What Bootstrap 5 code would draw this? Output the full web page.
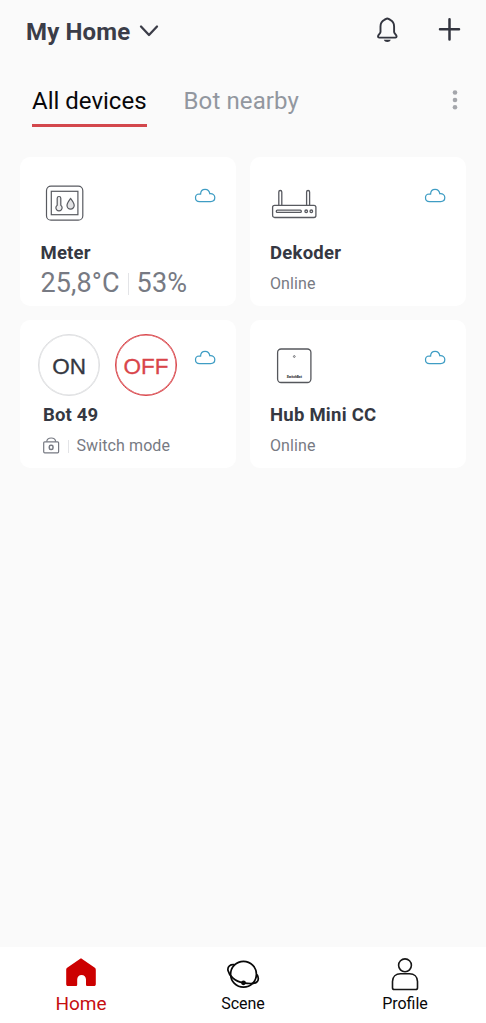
<!DOCTYPE html>
<html lang="en">
<head>
<meta charset="utf-8">
<meta name="viewport" content="width=device-width, initial-scale=1">
<title>My Home</title>
<link href="https://cdn.jsdelivr.net/npm/bootstrap@5.3.0/dist/css/bootstrap.min.css" rel="stylesheet">
<style>
body{background:#fafafa;font-family:Roboto,"Liberation Sans",sans-serif;color:#353841;height:1023px;overflow:hidden}
svg{display:block;flex:none;overflow:visible}
.top-bar{height:64px;padding:0 25px 0 26px}
.home-name{font-size:24px;line-height:30px;font-weight:700;color:#3b3d48;letter-spacing:.14px}
.tabs{height:63px;padding:18px 27px 0 32px;gap:37px}
.tab-item{font-size:24px;line-height:38px;height:45px;color:#92979f;white-space:nowrap;letter-spacing:.12px}
.tab-item.current{color:#08080a;border-bottom:3px solid #d3474c;letter-spacing:0}
.devices{display:grid;grid-template-columns:216px 216px;column-gap:14px;row-gap:14px;grid-template-rows:149px 148px;padding:30px 20px 0}
.device{background:#fff;border:0;border-radius:10px;padding:0 20px}
.art{height:84px}
.second .art{height:83px}
.device-name{font-size:18.5px;line-height:24px;font-weight:700;color:#353842;white-space:nowrap;letter-spacing:.25px}
.status{height:38px;font-size:16px;line-height:38px;color:#777a83;white-space:nowrap;letter-spacing:.1px}
.reading{font-size:27px;line-height:36px;padding-left:.5px}
.rule{width:1px;background:#e3e4e7}
.round-btn{width:62px;height:62px;margin-top:14px;border:1px solid #dedfe1;box-shadow:inset 0 0 0 .5px #dedfe1;border-radius:50%;padding:3px 0 0;font-family:"Liberation Sans",Arial,sans-serif;font-size:22.5px;line-height:57px;color:#353842;background:#fff;-webkit-text-stroke:.3px currentColor}
.round-btn.off{border-color:#d9454a;box-shadow:inset 0 0 0 .5px #d9454a;color:#d9454a}
.bottom-nav{height:76px;background:#fff}
.nav-cell{width:162px;font-size:16px;line-height:20px;color:#080808}
.nav-cell.current{font-size:19px;color:#c60d10}
.nav-cell svg{height:47px}
</style>
<script src="https://cdn.jsdelivr.net/npm/bootstrap@5.3.0/dist/js/bootstrap.bundle.min.js"></script>
</head>
<body class="d-flex flex-column">
<svg width="0" height="0" class="position-absolute" aria-hidden="true">
<symbol id="cloud" viewBox="0 0 22 15"><path d="M5.500 13.600C3 13.600 1.500 12 1.500 9.800S3 6.100 5.200 6h1.400C6.700 3 8.600 1.300 11.100 1.300s4.300 1.700 4.700 4.400C19 5.400 20.800 7.200 20.800 9.600s-1.700 4-4.100 4z" fill="none" stroke="#3f9dc4" stroke-width="1.250"/></symbol>
</svg>
<header class="top-bar d-flex align-items-center">
<span class="home-name">My Home</span>
<svg width="20" height="14" viewBox="0 0 20 14" style="margin-left:9px;margin-top:-2px" fill="none" stroke="#3b3d48" stroke-width="2.300" stroke-linecap="round" stroke-linejoin="round"><path d="M2 2.500L10 11l8-8.500"/></svg>
<svg class="ms-auto" width="24" height="28" viewBox="0 0 24 28" style="margin-right:39px;margin-top:-4px" fill="none" stroke="#33353f" stroke-width="1.900" stroke-linejoin="round"><path d="M12.300 2.500c-1 0-1.700.8-2.900 1.300C6.800 5 5.500 7.500 5.500 10.500V16c0 1.500-2.500 2.900-2.500 4.500 0 .7.500 1.100 1.200 1.100h16.200c.7 0 1.200-.4 1.200-1.100 0-1.600-2.500-3-2.500-4.500v-5.500c0-3-1.300-5.500-3.900-6.700C14 3.300 13.300 2.500 12.300 2.500z"/><path d="M8.800 23.700h7c-.7 1.500-1.700 2.200-3.500 2.200s-2.800-.7-3.500-2.200z" fill="#33353f" stroke="none"/></svg>
<svg width="23" height="24" viewBox="0 0 23 24" style="margin-top:-6px" stroke="#33353f" stroke-width="2.500" stroke-linecap="round"><path d="M2 12.300h19M11.500 2.200v20.400"/></svg>
</header>
<nav class="tabs d-flex">
<span class="tab-item current">All devices</span>
<span class="tab-item">Bot nearby</span>
<svg class="ms-auto" width="9" height="38" viewBox="0 0 9 38" fill="#a4a6ab"><circle cx="5" cy="10.500" r="2.300"/><circle cx="5" cy="18" r="2.300"/><circle cx="5" cy="25.300" r="2.300"/></svg>
</nav>
<main class="devices">
<section class="card device">
<div class="art d-flex justify-content-between">
<svg width="48" height="83" viewBox="0 0 48 83" fill="none" stroke="#585a60" stroke-width="1.200"><rect x="6.500" y="29.200" width="36.300" height="34" rx="4.500"/><rect x="11.300" y="34.300" width="26.600" height="23.400"/><path d="M17.200 49.200v-6.900a1.800 1.800 0 0 1 3.600 0v6.900a3.100 3.100 0 1 1-3.600 0z" transform="translate(0 -1)" fill="#ededee"/><path d="M30.600 41.500c1.700 2.300 3.600 4.800 3.600 7a3.600 3.600 0 0 1-7.200 0c0-2.200 1.900-4.700 3.600-7z" fill="#e2e2e4"/></svg>
<svg width="22" height="15" style="margin-top:31px"><use href="#cloud"/></svg>
</div>
<div class="device-name" style="padding-left:.5px;letter-spacing:.2px">Meter</div>
<div class="status reading d-flex"><span>25,8°C</span><span class="rule" style="height:22px;margin:8px 8px 0"></span><span>53%</span></div>
</section>
<section class="card device">
<div class="art d-flex justify-content-between">
<svg width="48" height="83" viewBox="0 0 48 83" fill="none" stroke="#585a60" stroke-width="1.300"><rect x="2.600" y="48.300" width="43.300" height="12.200" rx="2"/><path d="M8.800 48V35a1.500 1.500 0 0 1 3 0v13M36.600 48V35a1.500 1.500 0 0 1 3 0v13"/><rect x="6.300" y="53.200" width="25" height="2.200" rx="1"/><circle cx="36.200" cy="54.300" r="1.300"/><circle cx="41.300" cy="54.300" r="1.300"/></svg>
<svg width="22" height="15" style="margin-top:31px"><use href="#cloud"/></svg>
</div>
<div class="device-name">Dekoder</div>
<div class="status">Online</div>
</section>
<section class="card device second">
<div class="art d-flex" style="margin-left:-2px">
<button class="round-btn">ON</button>
<button class="round-btn off" style="margin-left:15px">OFF</button>
<svg class="ms-auto" width="22" height="15" style="margin-top:30px"><use href="#cloud"/></svg>
</div>
<div class="device-name" style="padding-left:3px;letter-spacing:.15px">Bot 49</div>
<div class="status d-flex align-items-center" style="padding-left:3px"><svg width="17" height="17" viewBox="0 0 17 17" style="margin-top:-2px" fill="none" stroke="#777a83" stroke-width="1.200"><rect x=".7" y="4.800" width="14.900" height="11" rx="1"/><path d="M3.700 4.600C4 2.200 5.500 1 8.200 1s4.200 1.200 4.500 3.600"/><rect x="6.300" y="8.200" width="3.700" height="4.300" rx="1.500" stroke-width="1.500"/></svg><span class="rule" style="height:13px;margin:0 8px 0 7.500px"></span><span>Switch mode</span></div>
</section>
<section class="card device second">
<div class="art d-flex justify-content-between">
<svg width="48" height="82" viewBox="0 0 48 82" fill="none" stroke="#55575c" stroke-width="1.300"><rect x="7.600" y="29" width="33.300" height="33.500" rx="3.500"/><circle cx="24.300" cy="36.500" r=".9" stroke-width=".8"/><text x="16.800" y="57.600" font-size="3.300" font-weight="900" textLength="15" lengthAdjust="spacingAndGlyphs" fill="#333" stroke="none">SwitchBot</text></svg>
<svg width="22" height="15" style="margin-top:30px"><use href="#cloud"/></svg>
</div>
<div class="device-name">Hub Mini CC</div>
<div class="status">Online</div>
</section>
</main>
<footer class="bottom-nav d-flex mt-auto">
<div class="nav-cell current d-flex flex-column align-items-center">
<svg width="34" height="47" viewBox="0 0 34 47"><path d="M17 11.300L30.500 20.500c1 .7 1.300 1.400 1.300 2.500v14c0 1.500-.6 2.100-2 2.100h-6.300c-1 0-1.500-.5-1.500-1.500v-5c0-3-1.900-4.700-4.400-4.700s-4.400 1.700-4.400 4.700v5c0 1-.5 1.500-1.500 1.500H4.200c-1.400 0-2-.6-2-2.100V23c0-1.100.3-1.800 1.300-2.500z" fill="#cc0000"/></svg>
<span>Home</span></div>
<div class="nav-cell d-flex flex-column align-items-center">
<svg width="34" height="47" viewBox="0 0 34 47" fill="none" stroke="#080808" stroke-width="1.700"><circle cx="17.500" cy="27.300" r="12.900"/><path d="M8.500 17.700C4.500 17 1.200 19.500 2 23.500c1 4.500 6.500 11 15.300 12.300 5.500.9 11.500 1 13.500-.8 2.200-2 1.900-4.500.2-7.500"/><circle cx="17.500" cy="35.800" r="2.400" fill="#080808" stroke="none"/></svg>
<span>Scene</span></div>
<div class="nav-cell d-flex flex-column align-items-center">
<svg width="34" height="47" viewBox="0 0 34 47" fill="none" stroke="#161616" stroke-width="1.600"><circle cx="17" cy="18.300" r="6.400"/><path d="M4.500 40.700V34.500c0-5 3.500-7.800 8-7.800h9c4.500 0 8 2.800 8 7.800v6.200c0 1.300-.5 1.800-1.800 1.800H6.300c-1.300 0-1.800-.5-1.800-1.800z"/></svg>
<span>Profile</span></div>
</footer>
</body>
</html>
